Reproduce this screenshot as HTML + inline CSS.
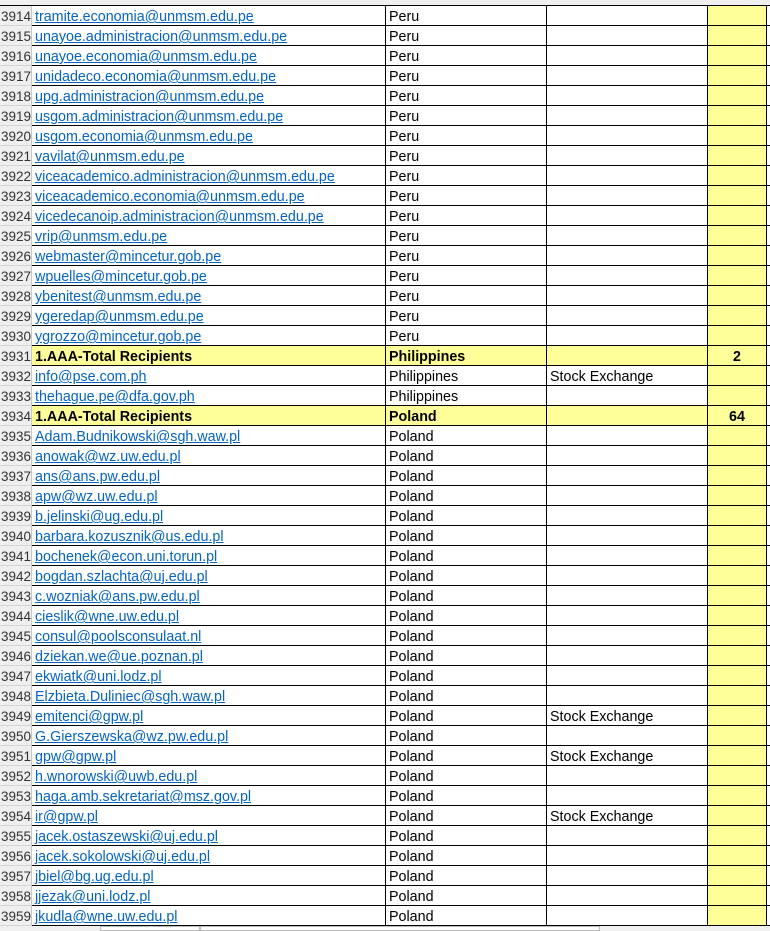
<!DOCTYPE html>
<html><head><meta charset="utf-8"><style>
*{margin:0;padding:0;box-sizing:border-box}
body{width:770px;height:931px;overflow:hidden;background:#fff;font-family:"Liberation Sans",Arial,sans-serif;font-size:14.3px;position:relative}
.top{position:absolute;left:0;top:0;width:770px;height:6px;background:#efefef;border-bottom:1px solid #000}
.r{position:absolute;left:0;height:20px;width:770px;display:flex}
.c{height:20px;border-right:1px solid #000;border-bottom:1px solid #000;line-height:22px;white-space:nowrap;overflow:hidden;padding-left:3px;flex:none}
.n{width:32px;background:#efefef;border-right:1px solid #c8c8c8;border-bottom:1px solid #d4d4d4;color:#333;padding-left:1px;font-size:13.5px}
.a{width:354px}.b{width:161px}.cc{width:161px}.d{width:59px;background:#ffff99;text-align:center;font-weight:bold;padding-left:0}.e{width:3px;border-right:none}
.a a{color:#0563c1;text-decoration:underline}
.y .a,.y .b,.y .cc{background:#ffff99;font-weight:bold}
.bot{position:absolute;left:0;top:926px;width:770px;height:5px;background:#f0f0f0}
</style></head><body>
<div class="top"></div>
<div id="g"></div>
<div class="bot"><div style="position:absolute;left:100px;top:0;width:100px;height:5px;border:1px solid #bbb;background:#fff"></div><div style="position:absolute;left:200px;top:0;width:400px;height:5px;border:1px solid #bbb;background:#fff"></div></div>
<script>
var d=[
["tramite.economia@unmsm.edu.pe","Peru"],["unayoe.administracion@unmsm.edu.pe","Peru"],["unayoe.economia@unmsm.edu.pe","Peru"],["unidadeco.economia@unmsm.edu.pe","Peru"],["upg.administracion@unmsm.edu.pe","Peru"],["usgom.administracion@unmsm.edu.pe","Peru"],["usgom.economia@unmsm.edu.pe","Peru"],["vavilat@unmsm.edu.pe","Peru"],["viceacademico.administracion@unmsm.edu.pe","Peru"],["viceacademico.economia@unmsm.edu.pe","Peru"],["vicedecanoip.administracion@unmsm.edu.pe ","Peru"],["vrip@unmsm.edu.pe","Peru"],["webmaster@mincetur.gob.pe","Peru"],["wpuelles@mincetur.gob.pe","Peru"],["ybenitest@unmsm.edu.pe","Peru"],["ygeredap@unmsm.edu.pe","Peru"],["ygrozzo@mincetur.gob.pe","Peru"],
["1.AAA-Total Recipients","Philippines","","2",1],["info@pse.com.ph","Philippines","Stock Exchange"],["thehague.pe@dfa.gov.ph","Philippines"],
["1.AAA-Total Recipients","Poland","","64",1],["Adam.Budnikowski@sgh.waw.pl","Poland"],["anowak@wz.uw.edu.pl","Poland"],["ans@ans.pw.edu.pl","Poland"],["apw@wz.uw.edu.pl","Poland"],["b.jelinski@ug.edu.pl","Poland"],["barbara.kozusznik@us.edu.pl","Poland"],["bochenek@econ.uni.torun.pl","Poland"],["bogdan.szlachta@uj.edu.pl","Poland"],["c.wozniak@ans.pw.edu.pl","Poland"],["cieslik@wne.uw.edu.pl","Poland"],["consul@poolsconsulaat.nl","Poland"],["dziekan.we@ue.poznan.pl","Poland"],["ekwiatk@uni.lodz.pl","Poland"],["Elzbieta.Duliniec@sgh.waw.pl","Poland"],["emitenci@gpw.pl","Poland","Stock Exchange"],["G.Gierszewska@wz.pw.edu.pl","Poland"],["gpw@gpw.pl","Poland","Stock Exchange"],["h.wnorowski@uwb.edu.pl","Poland"],["haga.amb.sekretariat@msz.gov.pl","Poland"],["ir@gpw.pl","Poland","Stock Exchange"],["jacek.ostaszewski@uj.edu.pl","Poland"],["jacek.sokolowski@uj.edu.pl","Poland"],["jbiel@bg.ug.edu.pl","Poland"],["jjezak@uni.lodz.pl","Poland"],["jkudla@wne.uw.edu.pl","Poland"]];
var h="";
d.forEach(function(r,i){
h+='<div class="r'+(r[4]?' y':'')+'" style="top:'+(6+i*20)+'px"><div class="c n">'+(3914+i)+'</div><div class="c a">'+(r[4]?r[0]:'<a>'+r[0]+'</a>')+'</div><div class="c b">'+r[1]+'</div><div class="c cc">'+(r[2]||'')+'</div><div class="c d">'+(r[3]||'')+'</div><div class="c e"></div></div>';
});
document.getElementById('g').innerHTML=h;
</script>
</body></html>
